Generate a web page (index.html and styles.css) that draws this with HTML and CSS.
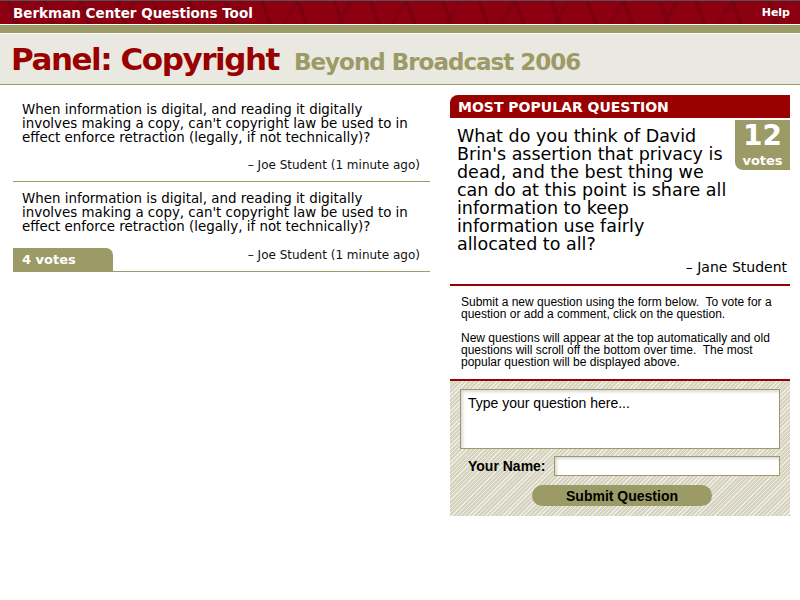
FILE: index.html
```html
<!DOCTYPE html>
<html>
<head>
<meta charset="utf-8">
<title>Berkman Center Questions Tool</title>
<link rel="stylesheet" href="styles.css">
</head>
<body>
<div class="topbar">
  <span class="brand">Berkman Center Questions Tool</span>
  <span class="help">Help</span>
</div>
<div class="olive-bar"></div>
<div class="titlebar">
  <h1 class="title">Panel: Copyright</h1>
  <span class="subtitle">Beyond Broadcast 2006</span>
</div>
<div class="main">
  <div class="questions">
    <div class="question">
      <p class="qtext">When information is digital, and reading it digitally involves making a copy, can't copyright law be used to in effect enforce retraction (legally, if not technically)?</p>
      <div class="qfoot">
        <span class="author">– Joe Student (1 minute ago)</span>
      </div>
    </div>
    <div class="question">
      <p class="qtext">When information is digital, and reading it digitally involves making a copy, can't copyright law be used to in effect enforce retraction (legally, if not technically)?</p>
      <div class="qfoot">
        <span class="votes-tab">4 votes</span>
        <span class="author">– Joe Student (1 minute ago)</span>
      </div>
    </div>
  </div>
  <div class="sidebar">
    <div class="popular-head">MOST POPULAR QUESTION</div>
    <div class="popular">
      <div class="popular-body">
        <p class="ptext">What do you think of David Brin's assertion that privacy is dead, and the best thing we can do at this point is share all information to keep information use fairly allocated to all?</p>
        <div class="pvotes"><span class="pnum">12</span><span class="plabel">votes</span></div>
      </div>
      <div class="pauthor">– Jane Student</div>
    </div>
    <div class="instructions">
      <p>Submit a new question using the form below.&nbsp; To vote for a question or add a comment, click on the question.</p>
      <p>New questions will appear at the top automatically and old questions will scroll off the bottom over time.&nbsp; The most popular question will be displayed above.</p>
    </div>
    <form class="ask">
      <textarea class="qinput">Type your question here...</textarea>
      <div class="namerow">
        <label class="namelabel">Your Name:</label>
        <input class="nameinput" type="text">
      </div>
      <div class="submitrow">
        <button type="button" class="submit">Submit Question</button>
      </div>
    </form>
  </div>
</div>
</body>
</html>
```
FILE: styles.css
```css
html, body {
  margin: 0;
  padding: 0;
  background: #fff;
}
body {
  font-family: "DejaVu Sans", Verdana, sans-serif;
  color: #000;
}
p { margin: 0; }

.topbar {
  height: 25px;
  border-top: 1px solid #555;
  border-bottom: 1px solid #fff;
  box-sizing: border-box;
  background-color: #8c0012;
  background-image:
    repeating-linear-gradient(70deg, rgba(110,0,10,0) 0 14px, rgba(112,0,12,0.5) 14px 18px, rgba(110,0,10,0) 18px 34px),
    repeating-linear-gradient(-60deg, rgba(120,0,14,0) 0 22px, rgba(115,0,12,0.4) 22px 26px, rgba(120,0,14,0) 26px 47px);
  display: flex;
  align-items: center;
  justify-content: space-between;
  padding: 0 10px 0 13px;
  color: #fff;
  font-weight: bold;
}
.brand {
  font-size: 13.5px;
}
.help {
  font-size: 11px;
}
.olive-bar {
  height: 8px;
  background: #9c9a66;
  border-bottom: 1px solid #fff;
}
.titlebar {
  height: 51px;
  box-sizing: border-box;
  background: #eae9e1;
  border-bottom: 1px solid #9c9a66;
  display: flex;
  align-items: baseline;
  padding-left: 11px;
}
.title {
  margin: 0;
  font-size: 31px;
  color: #990000;
  font-weight: bold;
  line-height: 50px;
  letter-spacing: -1.45px;
}
.subtitle {
  margin-left: 15px;
  font-size: 23px;
  color: #9c9a66;
  font-weight: bold;
  letter-spacing: -1px;
}

.main {
  display: flex;
  gap: 20px;
  padding-left: 13px;
}
.questions {
  width: 417px;
}
.question {
  border-bottom: 1px solid #9c9a66;
}
.qtext {
  font-size: 13.4px;
  line-height: 14px;
  padding: 18px 18px 0 9px;
}
.question + .question .qtext {
  padding-top: 10px;
}
.qfoot {
  display: flex;
  align-items: flex-end;
  justify-content: space-between;
  margin-top: 13px;
  height: 24px;
  padding-right: 10px;
}
.question:first-child .qfoot {
  margin-top: 12px;
}
.author {
  margin-left: auto;
  font-size: 12px;
  line-height: 14px;
  padding-bottom: 9px;
  color: #111;
}
.votes-tab {
  width: 100px;
  height: 23px;
  box-sizing: border-box;
  background: #9c9a66;
  color: #fff;
  font-weight: bold;
  font-size: 13px;
  line-height: 23px;
  padding-left: 9px;
  border-top-right-radius: 7px;
}

.sidebar {
  width: 340px;
  margin-top: 10px;
}
.popular-head {
  height: 23px;
  background: #990000;
  color: #fff;
  font-weight: bold;
  font-size: 14px;
  line-height: 24px;
  padding-left: 8px;
  border-top-left-radius: 8px;
}
.popular {
  border-bottom: 2px solid #990000;
}
.popular-body {
  display: flex;
  justify-content: space-between;
  align-items: flex-start;
}
.ptext {
  font-size: 17.5px;
  line-height: 18px;
  padding: 9px 0 0 7px;
  width: 271px;
}
.pvotes {
  margin-top: 2px;
  width: 55px;
  height: 50px;
  box-sizing: border-box;
  padding-top: 1px;
  background: #9c9a66;
  color: #fff;
  font-weight: bold;
  border-bottom-left-radius: 8px;
  display: flex;
  flex-direction: column;
  align-items: center;
}
.pnum {
  font-size: 28px;
  line-height: 30px;
  letter-spacing: 0;
}
.plabel {
  margin-top: 2px;
  font-size: 13px;
  line-height: 15px;
}
.pauthor {
  text-align: right;
  font-size: 14px;
  line-height: 18px;
  padding: 5px 3px 8px 0;
}
.instructions {
  font-family: "Liberation Sans", Arial, sans-serif;
  font-size: 12px;
  line-height: 12px;
  padding: 10px 8px 11px 11px;
  border-bottom: 2px solid #990000;
}
.instructions p + p {
  margin-top: 12px;
}
.ask {
  margin: 0;
  padding: 8px 10px 10px 10px;
  background-color: #e4e2d4;
  background-image: repeating-linear-gradient(135deg, #efeee4 0 1px, #d6d4c1 1px 3px);
  font-family: "Liberation Sans", Arial, sans-serif;
}
.qinput {
  display: block;
  width: 320px;
  height: 60px;
  box-sizing: border-box;
  margin: 0;
  border: 1px solid #9c9a66;
  background: #fff;
  box-shadow: inset 2px 2px 3px rgba(0,0,0,0.15);
  font-family: "Liberation Sans", Arial, sans-serif;
  font-size: 14px;
  padding: 5px 7px;
  resize: none;
  color: #000;
}
.namerow {
  display: flex;
  align-items: center;
  margin-top: 7px;
}
.namelabel {
  font-weight: bold;
  font-size: 14px;
  width: 94px;
  padding-left: 8px;
  box-sizing: border-box;
}
.nameinput {
  width: 226px;
  height: 20px;
  box-sizing: border-box;
  margin: 0;
  border: 1px solid #9c9a66;
  background: #fff;
  box-shadow: inset 2px 2px 3px rgba(0,0,0,0.15);
}
.submitrow {
  display: flex;
  justify-content: center;
  margin-top: 9px;
}
.submit {
  width: 180px;
  height: 21px;
  border: none;
  border-radius: 11px;
  background: #9c9a66;
  font-family: "Liberation Sans", Arial, sans-serif;
  font-weight: bold;
  font-size: 14px;
  color: #000;
  padding: 0;
  margin-left: 4px;
}
```
